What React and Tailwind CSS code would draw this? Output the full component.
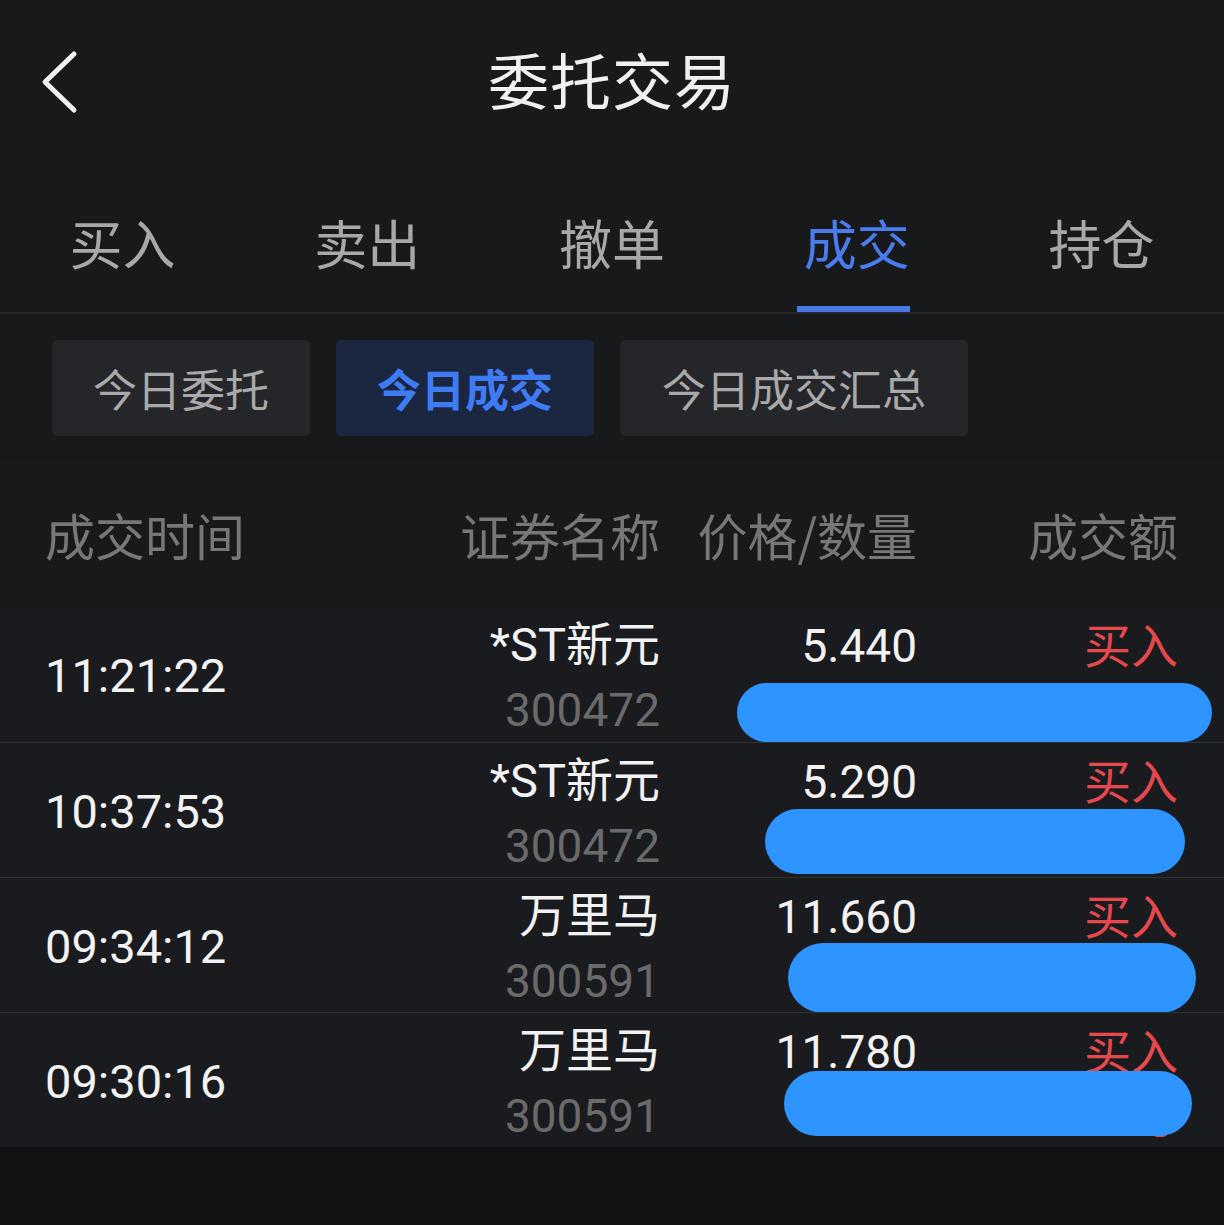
import React from 'react';

const tabs = ['买入', '卖出', '撤单', '成交', '持仓'];
const subTabs = ['今日委托', '今日成交', '今日成交汇总'];

const rows = [
    { time: '11:21:22', name: '*ST新元', code: '300472', price: '5.440', blob: 'left-[737px] top-[76px] w-[475px] h-[59px]' },
    { time: '10:37:53', name: '*ST新元', code: '300472', price: '5.290', blob: 'left-[765px] top-[66px] w-[420px] h-[65px]' },
    { time: '09:34:12', name: '万里马', code: '300591', price: '11.660', blob: 'left-[788px] top-[65px] w-[408px] h-[70px]' },
    { time: '09:30:16', name: '万里马', code: '300591', price: '11.780', blob: 'left-[784px] top-[58px] w-[408px] h-[65px]', dot: true },
];

const cjk = "font-['Noto_Sans_CJK_SC',sans-serif]";
const num = "font-['Roboto','Noto_Sans_CJK_SC',sans-serif]";

const App = () => {
    return (
        <div className={`min-h-screen flex flex-col bg-[#111214] ${cjk}`}>
            <div className="bg-[#18191b]">
                <header className="h-[166px] relative flex items-center justify-center pb-[10px]">
                    <svg className="absolute left-[36px] top-[46px]" width="48" height="74" viewBox="0 0 48 74">
                        <polyline points="38,8 9,36 38,64" fill="none" stroke="#f2f2f2" strokeWidth="5" strokeLinecap="round" strokeLinejoin="round" />
                    </svg>
                    <h1 className="text-[61px] leading-none text-[#f0f0f0] tracking-[1px]">委托交易</h1>
                </header>

                <nav className="h-[148px] grid grid-cols-5 border-b-2 border-[#26272a]">
                    {tabs.map((t) => (
                        <div key={t} className="relative flex items-center justify-center pt-[16px] pb-[10px]">
                            <span className={`text-[53px] leading-none ${t === '成交' ? 'text-[#4a7cf0]' : 'text-[#a8a8a8]'}`}>{t}</span>
                            {t === '成交' && <div className="absolute bottom-0 left-[63px] w-[113px] h-[6px] bg-[#4a78e6]" />}
                        </div>
                    ))}
                </nav>

                <div className="h-[149px] flex gap-[26px] px-[52px] pt-[26px] border-b border-[#1c1d20]">
                    {subTabs.map((s) => (
                        <div
                            key={s}
                            className={`h-[96px] rounded-[5px] flex items-center justify-center text-[44px] leading-none ${
                                s === '今日成交' ? 'w-[258px] bg-[#1b2640] text-[#3f7cf4] font-bold' : 'bg-[#25262a] text-[#a9a9a9] ' + (s === '今日委托' ? 'w-[258px]' : 'w-[348px]')
                            }`}
                        >
                            {s}
                        </div>
                    ))}
                </div>

                <div className="h-[143px] grid grid-cols-[355px_260px_257px_261px] pl-[45px] items-center text-[50px] leading-none text-[#777777] pb-[2px]">
                    <span>成交时间</span>
                    <span className="text-right">证券名称</span>
                    <span className="text-right">价格/数量</span>
                    <span className="text-right">成交额</span>
                </div>
            </div>

            <div className="border-t border-[#111214] bg-[#1a1b1e]">
                {rows.map((r, i) => (
                    <div key={i} className={`relative h-[135px] grid grid-cols-[355px_260px_257px_261px] pl-[45px] ${i > 0 ? 'border-t border-[#303135]' : ''}`}>
                        <div className={`flex items-center ${num} text-[47px] text-[#f2f2f2] leading-none pt-[2px]`}>{r.time}</div>
                        <div className="flex flex-col items-end pt-[12px]">
                            <span className={`${num} text-[47px] leading-[52px] text-[#f2f2f2]`}>{r.name}</span>
                            <span className={`${num} text-[46px] leading-[52px] text-[#6a6a6a] mt-[13px]`}>{r.code}</span>
                        </div>
                        <div className="flex flex-col items-end pt-[13px]">
                            <span className={`${num} text-[46px] leading-[52px] text-[#f2f2f2]`}>{r.price}</span>
                        </div>
                        <div className="flex flex-col items-end pt-[10px]">
                            <span className="text-[47px] leading-[52px] text-[#e5484d]">买入</span>
                        </div>
                        {r.dot && <div className="absolute left-[1152px] top-[114px] w-[16px] h-[10px] rounded-full bg-[#e04848]" />}
                        <div className={`absolute rounded-full bg-[#2e94ff] ${r.blob}`} />
                    </div>
                ))}
            </div>

            <div className="flex-1 bg-[#111214]" />
        </div>
    );
};

export default App;
